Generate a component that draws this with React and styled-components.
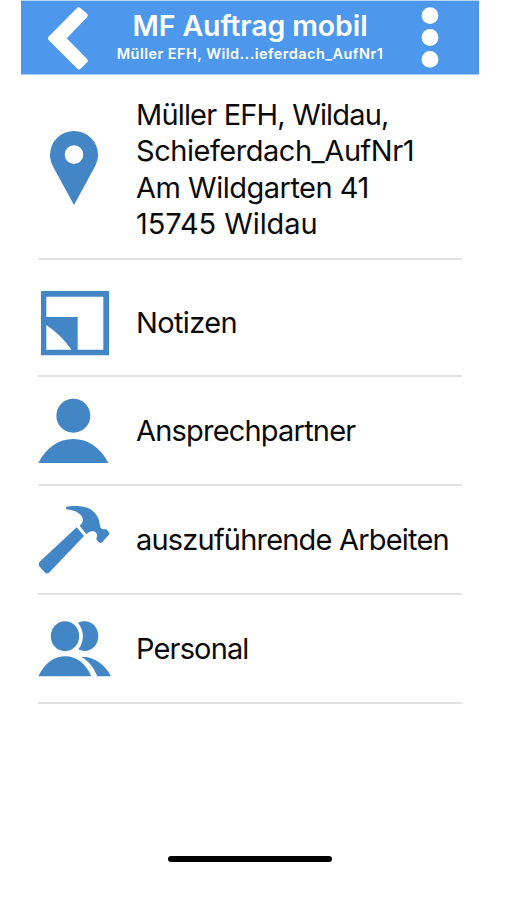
import React from "react"
import styled, { createGlobalStyle } from "styled-components"

const headerColor = "#4d98ec"
const iconColor = "#4286c5"

const GlobalStyle = createGlobalStyle`
  * {
    box-sizing: border-box;
  }
  body {
    margin: 0;
    background: #fff;
    font-family: Inter, "Liberation Sans", sans-serif;
  }
`

const Screen = styled.div`
  width: 458px;
  height: 900px;
  margin-left: 21px;
  overflow: hidden;
`

const Header = styled.header`
  display: flex;
  align-items: flex-start;
  height: 75px;
  border-top: 1px solid #b9d8f9;
  border-bottom: 1px solid #a9cdf6;
  background-color: ${headerColor};
  color: #fff;
`

const HeaderButton = styled.button`
  display: flex;
  padding: 0;
  border: 0;
  background: none;
  width: ${props => props.$width}px;
  padding-left: ${props => props.$inset}px;
  padding-top: 6px;
`

const Titles = styled.div`
  flex: 1;
  display: flex;
  flex-direction: column;
  align-items: center;
  white-space: nowrap;
`

const Title = styled.h1`
  margin: 7px 0 0;
  font-size: 28.5px;
  font-weight: 600;
  line-height: 36px;
  letter-spacing: ${props => props.$tracking}px;
`

const Subtitle = styled.div`
  margin-top: 1px;
  font-size: 14.5px;
  font-weight: 600;
  line-height: 18px;
  letter-spacing: ${props => props.$tracking}px;
`

const List = styled.ul`
  list-style: none;
  margin: 0 17px;
  padding: 0;
`

const Item = styled.li`
  display: flex;
  align-items: center;
  height: ${props => props.$height}px;
  padding-top: ${props => props.$offset || 0}px;
  border-bottom: 2px solid #e2e2e3;
`

const IconBox = styled.div`
  flex: none;
  display: flex;
  width: 98px;
`

const Label = styled.div`
  padding-top: ${props => (props.$multiline ? 4 : 2)}px;
  color: #0b0b0b;
  font-size: 29px;
  line-height: 36.4px;
  white-space: nowrap;
`

const Line = styled.div`
  letter-spacing: ${props => props.$tracking || 0}px;
`

const HomeIndicator = styled.div`
  width: 164px;
  height: 6px;
  margin: 152px 0 0 147px;
  border-radius: 3px;
  background: #000;
`

// All list icons share one 222 unit wide drawing area, three units per pixel.
const Icon = ({ top, height, children }) => (
  <svg
    width="74"
    height={height / 3}
    viewBox={`24 ${top} 222 ${height}`}
    fill={iconColor}
    overflow="visible"
  >
    {children}
  </svg>
)

const PinIcon = () => (
  <Icon top={123} height={222}>
    <path
      fillRule="evenodd"
      d="M132 345 L70 231 C63 218 60 207 60 195 A72 72 0 0 1 204 195 C204 207 201 218 194 231 Z M132 166 a28 28 0 1 0 0 56 a28 28 0 1 0 0 -56 Z"
    />
  </Icon>
)

const NoteIcon = () => (
  <Icon top={30} height={195}>
    <path
      fillRule="evenodd"
      d="M33 33 H237 V226 H33 Z M49 50 V111 H143 V209 H220 V50 Z M49 135 V209 H124 Q95 166 49 135 Z"
    />
  </Icon>
)

const PersonIcon = () => (
  <Icon top={39} height={195}>
    <circle cx="130" cy="92" r="51" />
    <path d="M25 234 C48 188 86 162 130 162 C174 162 212 188 235 234 Z" />
  </Icon>
)

const HammerIcon = () => (
  <Icon top={33} height={203}>
    <path d="M108 36 C125 31 152 32 172 38 C193 48 207 64 209 86 C210 95 212 101 219 103 C224 104 228 101 232 106 L237 112 Q239 116 236 120 L217 141 Q212 146 207 142 L201 136 Q197 131 201 125 C203 118 198 111 191 109 C183 107 176 110 169 118 L149 92 C158 84 161 76 157 67 C150 53 133 46 110 43 Q106 40 108 36 Z" />
    <path d="M140 97 L162 123 L57 233 Q51 238 45 233 L28 214 Q23 207 29 200 Z" />
  </Icon>
)

const PeopleIcon = () => (
  <Icon top={47} height={166}>
    <ellipse cx="105" cy="92.5" rx="42.5" ry="45" />
    <path d="M144 52 C177 37 205 61 205 92 C205 125 174 147 145 132 C163 109 164 76 144 52 Z" />
    <path d="M25 213 C44 173 73 153 106 153 C140 153 168 176 184 213 Z" />
    <path d="M154 154 C192 154 225 176 243 213 H202 C192 187 176 167 154 154 Z" />
  </Icon>
)

const BackIcon = () => (
  <svg width="40" height="63" viewBox="143 23 120 189">
    <path
      d="M235 32 L254 48 L188 117 L254 184 L236 202 L151 117 Z"
      fill="#fff"
      stroke="#fff"
      strokeWidth="16"
      strokeLinejoin="round"
    />
  </svg>
)

const MenuIcon = () => (
  <svg width="18" height="62" viewBox="0 0 18 62" fill="#fff">
    <circle cx="9" cy="8.6" r="8.4" />
    <circle cx="9" cy="30.5" r="8.4" />
    <circle cx="9" cy="52.4" r="8.4" />
  </svg>
)

const items = [
  {
    icon: PinIcon,
    height: 185,
    offset: 2,
    lines: [
      ["Müller EFH, Wildau,", -0.82],
      ["Schieferdach_AufNr1", -0.47],
      ["Am Wildgarten 41", -0.5],
      ["15745 Wildau", -0.08],
    ],
  },
  { icon: NoteIcon, height: 117, offset: 10, lines: [["Notizen", -0.62]] },
  { icon: PersonIcon, height: 109, lines: [["Ansprechpartner", -0.8]] },
  { icon: HammerIcon, height: 109, lines: [["auszuführende Arbeiten", -0.8]] },
  { icon: PeopleIcon, height: 109, lines: [["Personal", -0.85]] },
]

const App = () => (
  <>
    <GlobalStyle />
    <Screen>
      <Header>
        <HeaderButton $width={79} $inset={27} aria-label="Zurück">
          <BackIcon />
        </HeaderButton>
        <Titles>
          <Title $tracking={-0.1}>MF Auftrag mobil</Title>
          <Subtitle $tracking={0.46}>Müller EFH, Wild...ieferdach_AufNr1</Subtitle>
        </Titles>
        <HeaderButton $width={79} $inset={21} aria-label="Menü">
          <MenuIcon />
        </HeaderButton>
      </Header>
      <List>
        {items.map(({ icon: ItemIcon, height, offset, lines }) => (
          <Item key={lines[0][0]} $height={height} $offset={offset}>
            <IconBox>
              <ItemIcon />
            </IconBox>
            <Label $multiline={lines.length > 1}>
              {lines.map(([text, tracking]) => (
                <Line key={text} $tracking={tracking}>
                  {text}
                </Line>
              ))}
            </Label>
          </Item>
        ))}
      </List>
      <HomeIndicator />
    </Screen>
  </>
)

export default App
